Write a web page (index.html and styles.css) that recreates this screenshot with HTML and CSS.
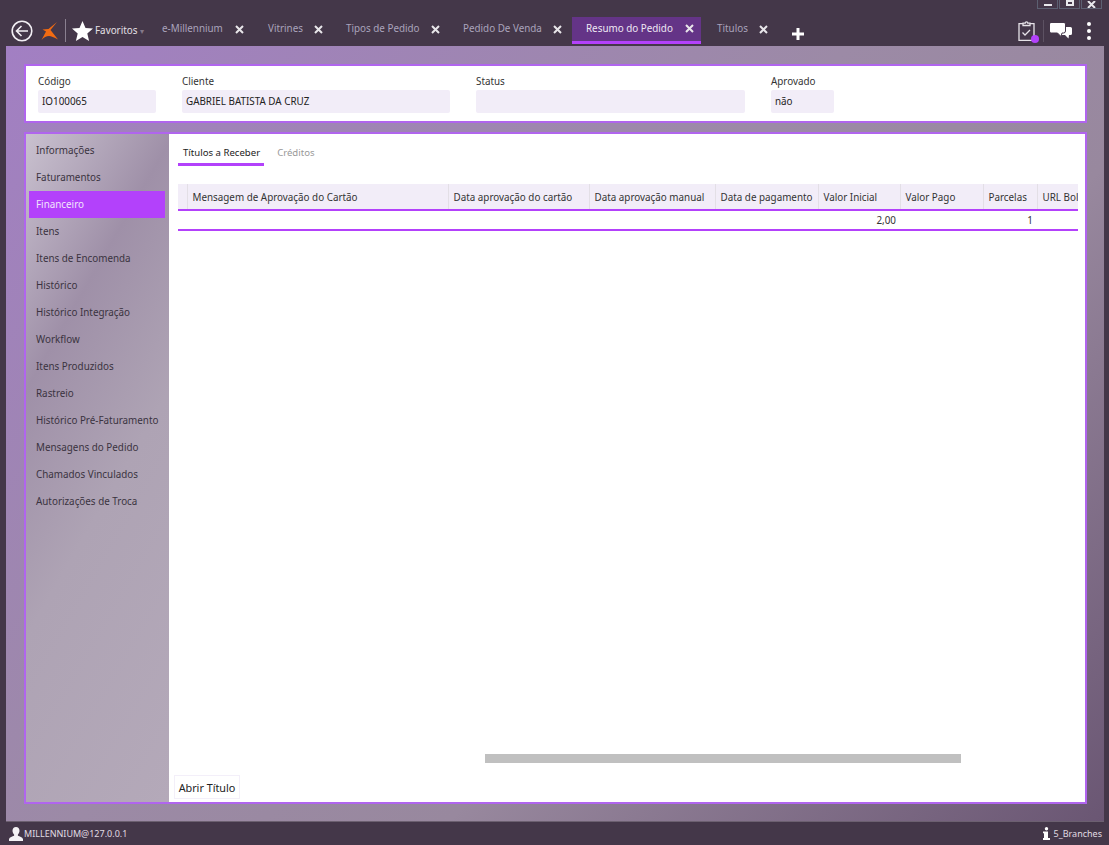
FILE: index.html
```html
<!DOCTYPE html>
<html lang="en">
<head>
  <meta charset="UTF-8">
  <title>Resumo do Pedido</title>
  <link rel="stylesheet" href="styles.css">
</head>
<body>
  <div class="window-controls">
    <div class="win-btn"><span class="win-min"></span></div>
    <div class="win-btn"><span class="win-max"></span></div>
    <div class="win-btn">
      <svg width="9" height="7" viewBox="0 0 9 7" fill="none" stroke="#e8e8ec" stroke-width="2"><path d="M1 0l7 7M8 0L1 7"/></svg>
    </div>
  </div>
  <div class="topbar">
    <svg class="back-icon" width="22" height="22" viewBox="0 0 22 22" fill="none" stroke="#f2eff4" stroke-width="1.6">
      <circle cx="11" cy="11" r="9.8"/>
      <path d="M17 11H5.5M10.5 6L5.5 11l5 5"/>
    </svg>
    <svg class="logo-icon" width="18" height="20" viewBox="0 0 18 20">
      <path fill="#f26b12" d="M16 1 9.500 9 17 18.500Q11 15 8 15 4 15 .5 19L5 10.500 1.500 8.500 7.500 8Z"/>
    </svg>
    <div class="top-divider"></div>
    <svg class="star-icon" width="21" height="20" viewBox="0 0 21 20">
      <path fill="#fff" d="M10.500 0l3 7 7.500.6-5.700 4.900 1.800 7.400-6.600-4-6.600 4 1.800-7.400L0 7.600 7.500 7z"/>
    </svg>
    <div class="favorites">Favoritos <span class="caret">▾</span></div>
    <div class="tabs">
      <div class="tab tab-millennium">e-Millennium<svg class="tab-x" width="9" height="9" viewBox="0 0 9 9"><path d="M1 1l7 7M8 1L1 8"/></svg></div>
      <div class="tab tab-vitrines">Vitrines<svg class="tab-x" width="9" height="9" viewBox="0 0 9 9"><path d="M1 1l7 7M8 1L1 8"/></svg></div>
      <div class="tab tab-tipos">Tipos de Pedido<svg class="tab-x" width="9" height="9" viewBox="0 0 9 9"><path d="M1 1l7 7M8 1L1 8"/></svg></div>
      <div class="tab tab-venda">Pedido De Venda<svg class="tab-x" width="9" height="9" viewBox="0 0 9 9"><path d="M1 1l7 7M8 1L1 8"/></svg></div>
      <div class="tab active tab-resumo">Resumo do Pedido<svg class="tab-x" width="9" height="9" viewBox="0 0 9 9"><path d="M1 1l7 7M8 1L1 8"/></svg></div>
      <div class="tab tab-titulos">Titulos<svg class="tab-x" width="9" height="9" viewBox="0 0 9 9"><path d="M1 1l7 7M8 1L1 8"/></svg></div>
      <div class="tab-add">
        <svg width="12" height="12" viewBox="0 0 12 12"><path fill="#fff" d="M4.500 0h3v4.500H12v3H7.500V12h-3V7.500H0v-3h4.500z"/></svg>
      </div>
    </div>
    <div class="top-actions">
      <div class="clipboard">
        <svg width="17" height="20" viewBox="0 0 17 20" fill="none" stroke="#e6e2e8" stroke-width="1.3">
          <path d="M5 2.700H1v16.600h15V2.700h-4"/>
          <path d="M5 4.500V2.200h2.200a1.300 1.300 0 0 1 2.600 0H12v2.300z"/>
          <path d="M4.500 11.500l2.500 2.500 5-5"/>
        </svg>
        <span class="notify-dot"></span>
      </div>
      <div class="action-divider"></div>
      <svg width="22" height="16" viewBox="0 0 22 16">
        <path fill="#fff" d="M11 4h9.500A1.500 1.500 0 0 1 22 5.500v5a1.500 1.500 0 0 1-1.500 1.500H19l-.5 3.500L15 12h-4z"/>
        <path fill="#fff" stroke="#443749" d="M2 -.5h11A2 2 0 0 1 15.500 2v6a2 2 0 0 1-2 2H12l-1 3.500L7.500 10H2A2 2 0 0 1-.5 8V2A2 2 0 0 1 2-.5z"/>
      </svg>
      <div class="kebab"><span></span><span></span><span></span></div>
    </div>
  </div>

  <div class="workspace">
    <div class="order-card">
      <div class="field field-code">
        <label>Código</label>
        <div class="field-value">IO100065</div>
      </div>
      <div class="field field-client">
        <label>Cliente</label>
        <div class="field-value">GABRIEL BATISTA DA CRUZ</div>
      </div>
      <div class="field field-status">
        <label>Status</label>
        <div class="field-value"></div>
      </div>
      <div class="field field-approved">
        <label>Aprovado</label>
        <div class="field-value">não</div>
      </div>
    </div>

    <div class="main-card">
      <div class="side-menu">
        <div class="side-item">Informações</div>
        <div class="side-item">Faturamentos</div>
        <div class="side-item active">Financeiro</div>
        <div class="side-item">Itens</div>
        <div class="side-item">Itens de Encomenda</div>
        <div class="side-item">Histórico</div>
        <div class="side-item">Histórico Integração</div>
        <div class="side-item">Workflow</div>
        <div class="side-item">Itens Produzidos</div>
        <div class="side-item">Rastreio</div>
        <div class="side-item">Histórico Pré-Faturamento</div>
        <div class="side-item">Mensagens do Pedido</div>
        <div class="side-item">Chamados Vinculados</div>
        <div class="side-item">Autorizações de Troca</div>
      </div>
      <div class="content">
        <div class="sub-tabs">
          <div class="sub-tab active">Títulos a Receber</div>
          <div class="sub-tab">Créditos</div>
        </div>
        <div class="grid-wrap">
          <table class="grid">
            <colgroup>
              <col class="c0"><col class="c1"><col class="c2"><col class="c3"><col class="c4"><col class="c5"><col class="c6"><col class="c7"><col class="c8">
            </colgroup>
            <thead>
              <tr>
                <th></th>
                <th>Mensagem de Aprovação do Cartão</th>
                <th>Data aprovação do cartão</th>
                <th>Data aprovação manual</th>
                <th>Data de pagamento</th>
                <th>Valor Inicial</th>
                <th>Valor Pago</th>
                <th>Parcelas</th>
                <th><span class="clip-text">URL Bol</span></th>
              </tr>
            </thead>
            <tbody>
              <tr>
                <td></td><td></td><td></td><td></td><td></td>
                <td class="num">2,00</td>
                <td></td>
                <td class="num">1</td>
                <td></td>
              </tr>
            </tbody>
          </table>
        </div>
        <div class="hscroll"><div class="hscroll-thumb"></div></div>
        <div class="actions">
          <button class="btn">Abrir Título</button>
        </div>
      </div>
    </div>
  </div>

  <div class="statusbar">
    <div class="status-left">
      <svg width="14" height="14" viewBox="0 0 14 14"><path fill="#f4f2f5" d="M7 0c2.200 0 3.500 1.700 3.500 3.800 0 1.500-.7 2.900-1.600 3.700v1.300c1.800.6 4.400 1.500 5.100 3.200v2H0v-2c.7-1.700 3.300-2.600 5.100-3.200V7.500C4.200 6.700 3.500 5.300 3.500 3.800 3.500 1.700 4.800 0 7 0z"/></svg>
      <span>MILLENNIUM@127.0.0.1</span>
    </div>
    <div class="status-right">
      <svg width="7" height="13" viewBox="0 0 7 13"><circle cx="3.500" cy="1.700" r="1.700" fill="#fff"/><path fill="#fff" d="M1 4.500h4V11h2v2H0v-2h1V6.300H0V4.500z"/></svg>
      <span>5_Branches</span>
    </div>
  </div>
</body>
</html>
```

FILE: styles.css
```css
html, body {
  height: 100%;
}
body {
  margin: 0;
  height: 845px;
  display: flex;
  flex-direction: column;
  overflow: hidden;
  background: #443749;
  font-family: "Noto Sans", "Open Sans", sans-serif;
  font-size: 9.85px;
  color: #333;
  position: relative;
}
.window-controls {
  position: absolute;
  top: 0;
  right: 7px;
  display: flex;
  gap: 1px;
}
.win-btn {
  width: 19px;
  height: 8px;
  border: 1px solid #5c6072;
  border-top: none;
  display: flex;
  align-items: flex-end;
  justify-content: center;
  overflow: hidden;
}
.win-min {
  width: 8px;
  height: 2px;
  margin-bottom: 2px;
  background: #e8e8ec;
}
.win-max {
  width: 8px;
  height: 6px;
  margin-bottom: 2px;
  box-sizing: border-box;
  border: 2px solid #e8e8ec;
}

/* top bar */
.topbar {
  height: 46px;
  flex: none;
  display: flex;
  align-items: flex-end;
  padding-left: 11px;
  box-sizing: border-box;
}
.back-icon {
  margin-bottom: 4px;
}
.logo-icon {
  margin: 0 0 5px 8px;
}
.top-divider {
  width: 1px;
  height: 23px;
  margin: 0 6px 4px 6px;
  background: #8a8090;
}
.star-icon {
  margin-bottom: 5px;
}
.favorites {
  margin: 0 0 9px 2px;
  width: 67px;
  color: #e4e0e6;
  white-space: nowrap;
}
.caret {
  color: #85798a;
  font-size: 8px;
}
.tabs {
  display: flex;
  align-items: flex-end;
  height: 29px;
  margin-bottom: 2px;
}
.tab {
  height: 27px;
  display: flex;
  align-items: center;
  box-sizing: border-box;
  padding-bottom: 5px;
  color: #aaa4bc;
  white-space: nowrap;
}
.tab-x {
  fill: none;
  stroke: #e8e6ea;
  stroke-width: 2;
  margin-top: 2px;
}
.tab-millennium { width: 106px; }
.tab-millennium .tab-x { margin-left: 12px; }
.tab-vitrines { width: 78px; }
.tab-vitrines .tab-x { margin-left: 11px; }
.tab-tipos { width: 117px; }
.tab-tipos .tab-x { margin-left: 11px; }
.tab-venda { width: 109px; }
.tab-venda .tab-x { margin-left: 11px; }
.tab.active {
  width: 129px;
  margin-right: 16px;
  padding-left: 14px;
  padding-bottom: 3px;
  background: #643487;
  border-bottom: 3px solid #b341fb;
  color: #efe8f4;
}
.tab-resumo .tab-x { margin-left: 12px; }
.tab-titulos { width: 75px; }
.tab-titulos .tab-x { margin-left: 11px; }
.tab-add {
  height: 16px;
}
.top-actions {
  margin-left: auto;
  display: flex;
  align-items: center;
  height: 26px;
  margin-bottom: 2px;
  padding-right: 18px;
}
.clipboard {
  position: relative;
  width: 17px;
  height: 20px;
}
.notify-dot {
  position: absolute;
  right: -4px;
  bottom: -2px;
  width: 8px;
  height: 8px;
  border-radius: 50%;
  background: #b341fb;
}
.action-divider {
  width: 1px;
  height: 22px;
  margin: 0 6px 0 8px;
  background: #5d5263;
}
.kebab {
  display: flex;
  flex-direction: column;
  gap: 3px;
  margin-left: 15px;
}
.kebab span {
  width: 4px;
  height: 4px;
  border-radius: 50%;
  background: #fff;
}

/* workspace */
.workspace {
  flex: 1;
  margin: 0 5px 0 6px;
  padding: 18px 17px 17px 18px;
  display: flex;
  flex-direction: column;
  gap: 9px;
  background: linear-gradient(135deg, #a27fc3 0%, #9c8aa6 45%, #98889e 65%, #6a5673 100%);
  border-bottom: 1px solid #6c6070;
  min-height: 0;
}
.order-card {
  height: 59px;
  flex: none;
  box-sizing: border-box;
  border: 2px solid #b065ee;
  background: #fff;
  display: flex;
  padding: 7px 0 0 12px;
}
.field label {
  display: block;
  height: 17px;
  line-height: 17px;
  color: #333;
}
.field-value {
  height: 23px;
  line-height: 22px;
  background: #f2edf8;
  border-radius: 2px;
  padding-left: 4px;
  color: #222;
}
.field-code { width: 118px; margin-right: 26px; }
.field-client { width: 268px; margin-right: 26px; }
.field-status { width: 269px; margin-right: 26px; }
.field-approved { width: 63px; }

.main-card {
  flex: 1;
  min-height: 0;
  box-sizing: border-box;
  border: 2px solid #b065ee;
  background: #fff;
  display: flex;
}
.side-menu {
  width: 143px;
  flex: none;
  padding: 3px 4px 0 3px;
  box-sizing: border-box;
  background: linear-gradient(120deg, #c9c1cf 0%, #9f90a8 28%, #aea3b4 55%, #b4a9b9 100%);
}
.side-item {
  height: 27px;
  line-height: 27px;
  padding-left: 7px;
  color: #3a3340;
  white-space: nowrap;
}
.side-item.active {
  background: #b341fb;
  color: #f2e6fb;
}
.content {
  flex: 1;
  min-width: 0;
  display: flex;
  flex-direction: column;
  padding: 0 7px 3px 9px;
}
.sub-tabs {
  display: flex;
  gap: 8px;
  height: 32px;
  flex: none;
}
.sub-tab {
  padding: 0 4px 0 5px;
  height: 32px;
  line-height: 37px;
  box-sizing: border-box;
  font-size: 9.6px;
  color: #999;
}
.sub-tab.active {
  color: #222;
  border-bottom: 3px solid #b341fb;
}
.grid-wrap {
  margin-top: 18px;
  flex: 1;
  min-height: 0;
  overflow: hidden;
}
.grid {
  width: 900px;
  table-layout: fixed;
  border-collapse: collapse;
}
.c0 { width: 9px; }
.c1 { width: 261px; }
.c2 { width: 141px; }
.c3 { width: 126px; }
.c4 { width: 103px; }
.c5 { width: 82px; }
.c6 { width: 83px; }
.c7 { width: 54px; }
.c8 { width: 41px; }
.grid th {
  height: 25px;
  padding: 0 0 0 5px;
  background: #f2edf8;
  border-bottom: 2px solid #b341fb;
  border-left: 1px solid #e3dfe6;
  font-weight: normal;
  color: #333;
  text-align: left;
  white-space: nowrap;
  overflow: hidden;
}
.grid th:first-child {
  border-left: none;
  padding: 0;
}
.grid td {
  height: 18px;
  padding: 0 4px 0 0;
  border-bottom: 2px solid #b341fb;
}
.grid td.num {
  text-align: right;
}
.hscroll {
  flex: none;
  height: 9px;
  margin: 0 0 12px 307px;
}
.hscroll-thumb {
  width: 476px;
  height: 9px;
  background: #c0c0c0;
}
.actions {
  flex: none;
  margin-left: -4px;
  display: flex;
}
.btn {
  width: 66px;
  height: 24px;
  padding: 0;
  border: 1px solid #f3eff9;
  background: #fff;
  color: #222;
  font-family: inherit;
  font-size: 10.8px;
}

/* status bar */
.statusbar {
  height: 23px;
  flex: none;
  display: flex;
  align-items: center;
  justify-content: space-between;
  padding: 0 7px 0 9px;
  color: #e0dce3;
  font-size: 9px;
}
.status-left, .status-right {
  display: flex;
  align-items: center;
  gap: 1px;
}
.status-right {
  gap: 4px;
}
```
